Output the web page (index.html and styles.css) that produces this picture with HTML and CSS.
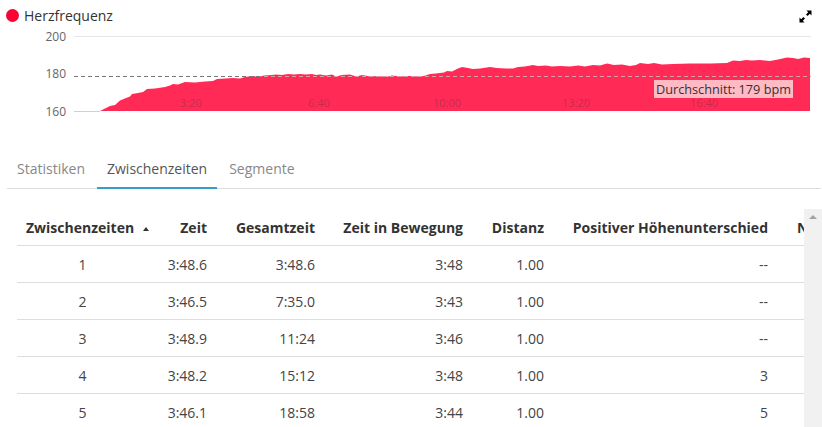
FILE: index.html
```html
<!DOCTYPE html>
<html>
<head>
  <title>Herzfrequenz</title>
  <link rel="stylesheet" href="styles.css">
</head>
<body>
  <div class="legend">
    <span class="dot"></span>
    <span class="legend-name">Herzfrequenz</span>
    <svg class="expand" width="13" height="13" viewBox="0 0 13 13">
      <path d="M7.5 0.5H12.5V5.5L10.8 3.8L8.6 6L7 4.4L9.2 2.2Z M5.5 12.5H0.5V7.5L2.2 9.2L4.4 7L6 8.6L3.8 10.8Z" fill="#000"/>
    </svg>
  </div>

  <svg class="chart" width="822" height="94" viewBox="0 28 822 94">
    <line class="grid" x1="74" y1="36.5" x2="811" y2="36.5"/>
    <line class="grid base" x1="74" y1="111.5" x2="100" y2="111.5"/>
    <path class="area" d="M100 111 L105 108.5 L110 106 L115 105 L120 100.5 L126 98 L130 96.5 L132 94 L138 93 L143 92 L147 89 L155 88.5 L165 87 L170 85.5 L173 84 L178 84.5 L185 82 L195 82.5 L205 81.5 L213 81 L217 79 L225 78.5 L233 78 L240 78.5 L245 77 L253 76 L258 77 L264 75.5 L272 75 L276 74.5 L282 75 L288 74 L294 74.5 L300 74 L306 74.5 L312 74 L316 75 L320 74.5 L326 75.5 L332 74.5 L336 76.5 L342 75 L350 74.5 L356 76.5 L362 75 L370 76.5 L378 76 L386 77 L392 75.5 L400 76.5 L410 76 L418 76.5 L424 76 L430 74 L436 73.5 L444 72.5 L447 71 L452 71.5 L458 68.5 L462 67 L468 68 L473 69 L480 68.5 L490 67 L497 68 L506 68.5 L513 68.5 L518 67 L525 66.5 L533 65 L538 66 L546 65.5 L552 66.5 L560 66 L570 66.5 L578 65.5 L585 66.5 L593 65 L600 65.5 L607 63.5 L614 65 L622 64.5 L630 66 L636 65 L640 63 L648 64 L654 63 L662 64.5 L673 64 L690 63.5 L710 63.5 L727 63 L733 60.5 L740 61 L746 60 L752 60.5 L760 60 L770 61 L778 59.5 L787 57.5 L793 58 L798 59 L804 57.5 L810 58 L810 111 Z"/>
    <line class="avg" x1="74" y1="76.5" x2="262" y2="76.5"/>
    <line class="avg on-area" x1="264" y1="76.5" x2="811" y2="76.5"/>
    <g class="tick">
      <text x="191" y="107">3:20</text>
      <text x="319" y="107">6:40</text>
      <text x="447" y="107">10:00</text>
      <text x="576" y="107">13:20</text>
      <text x="704" y="107">16:40</text>
    </g>
    <g class="yaxis">
      <text x="66" y="41">200</text>
      <text x="66" y="78">180</text>
      <text x="66" y="115.5">160</text>
    </g>
    <rect class="avg-box" x="654" y="80" width="139" height="18"/>
    <text class="avg-label" x="656" y="93.5">Durchschnitt: 179 bpm</text>
  </svg>

  <div class="tabs">
    <a class="tab">Statistiken</a>
    <a class="tab active">Zwischenzeiten</a>
    <a class="tab">Segmente</a>
  </div>

  <div class="table-wrap">
    <div class="table-clip">
      <table class="splits">
        <colgroup>
          <col class="c1"><col class="c2"><col class="c3"><col class="c4"><col class="c5"><col class="c6"><col class="c7">
        </colgroup>
        <thead>
          <tr>
            <th class="first">Zwischenzeiten <span class="sort"></span></th>
            <th>Zeit</th>
            <th>Gesamtzeit</th>
            <th>Zeit in Bewegung</th>
            <th>Distanz</th>
            <th>Positiver Höhenunterschied</th>
            <th>Negativer</th>
          </tr>
        </thead>
        <tbody>
          <tr><td class="first">1</td><td>3:48.6</td><td>3:48.6</td><td>3:48</td><td>1.00</td><td>--</td><td></td></tr>
          <tr><td class="first">2</td><td>3:46.5</td><td>7:35.0</td><td>3:43</td><td>1.00</td><td>--</td><td></td></tr>
          <tr><td class="first">3</td><td>3:48.9</td><td>11:24</td><td>3:46</td><td>1.00</td><td>--</td><td></td></tr>
          <tr><td class="first">4</td><td>3:48.2</td><td>15:12</td><td>3:48</td><td>1.00</td><td>3</td><td></td></tr>
          <tr><td class="first">5</td><td>3:46.1</td><td>18:58</td><td>3:44</td><td>1.00</td><td>5</td><td></td></tr>
        </tbody>
      </table>
    </div>
    <div class="scrollbar"><span class="scroll-up"></span></div>
  </div>
</body>
</html>
```

FILE: styles.css
```css
html, body {
  margin: 0;
  height: 427px;
  overflow: hidden;
}

body {
  background: #fff;
  color: #333;
  font-family: "Open Sans", sans-serif;
  font-size: 14px;
}

.legend {
  display: flex;
  align-items: center;
  height: 28px;
  padding: 2px 10px 0 6px;
  box-sizing: border-box;
}

.dot {
  width: 13px;
  height: 13px;
  border-radius: 50%;
  background: #ff0035;
  margin-right: 5px;
}

.legend-name {
  flex: 1;
  font-size: 14px;
  color: #333;
}

.expand {
  display: block;
  margin-top: 2px;
}

.chart {
  display: block;
  font-family: "Open Sans", sans-serif;
}

.grid {
  stroke: #e6e6e6;
  stroke-width: 1;
}

.grid.base {
  stroke: #c4d3de;
}

.area {
  fill: #ff2a56;
}

.avg {
  stroke: #777;
  stroke-width: 1;
  stroke-dasharray: 4 3;
}

.avg.on-area {
  stroke: #d3a0a6;
}

.tick text {
  font-size: 11px;
  fill: #333;
  fill-opacity: .3;
  text-anchor: middle;
}

.yaxis text {
  font-size: 12px;
  fill: #666;
  text-anchor: end;
}

.avg-box {
  fill: #ffbac4;
}

.avg-label {
  font-size: 12.7px;
  fill: #333;
}

.tabs {
  display: flex;
  gap: 2px;
  height: 44px;
  margin: 22px 1px 0 7px;
  border-bottom: 1px solid #ddd;
  font-size: 14px;
}

.tab {
  padding: 0 10px;
  line-height: 49px;
  height: 45px;
  color: #888;
  box-sizing: border-box;
}

.tab.active {
  color: #555;
  border-bottom: 2px solid #3a9cc9;
}

.table-wrap {
  display: flex;
  height: 218px;
  margin-top: 20px;
  margin-left: 17px;
}

.table-clip {
  width: 787px;
  overflow: hidden;
}

.splits {
  table-layout: fixed;
  border-collapse: collapse;
  width: 900px;
  font-size: 14px;
  color: #444;
}

.c1 { width: 131px; }
.c2 { width: 68px; }
.c3 { width: 108px; }
.c4 { width: 148px; }
.c5 { width: 81px; }
.c6 { width: 224px; }
.c7 { width: 140px; }

.splits th,
.splits td {
  padding: 0 9px 0 0;
  text-align: right;
  white-space: nowrap;
  overflow: hidden;
}

.splits th {
  height: 36px;
  font-size: 14px;
  font-weight: 700;
  color: #333;
  border-bottom: 1px solid #ddd;
}

.splits td {
  height: 36px;
  border-bottom: 1px solid #ddd;
}

.splits th:last-child {
  text-align: left;
  padding-left: 20px;
}

.splits th.first {
  text-align: left;
  padding-left: 9px;
  overflow: visible;
}

.splits td.first {
  text-align: center;
  padding: 0;
}

.sort {
  display: inline-block;
  width: 0;
  height: 0;
  margin: 0 0 2px 5px;
  border-left: 3px solid transparent;
  border-right: 3px solid transparent;
  border-bottom: 4px solid #333;
}

.scrollbar {
  width: 18px;
  background: #f1f1f1;
  display: flex;
  justify-content: center;
}

.scroll-up {
  width: 0;
  height: 0;
  margin-top: 6px;
  border-left: 4px solid transparent;
  border-right: 4px solid transparent;
  border-bottom: 4px solid #a3a3a3;
}
```
